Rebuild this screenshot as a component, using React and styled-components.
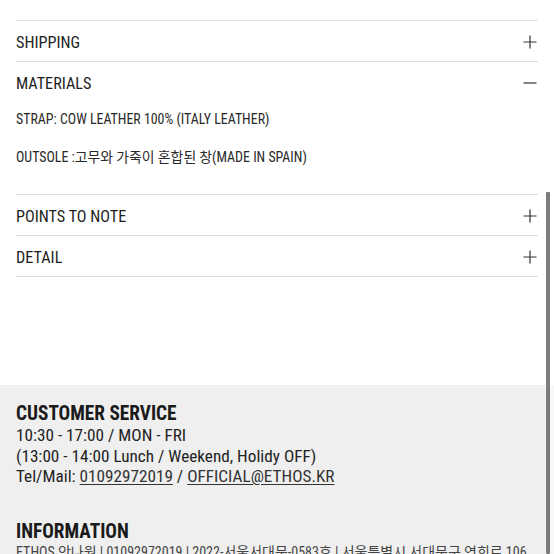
import React from "react";
import styled, { createGlobalStyle } from "styled-components";

const Global = createGlobalStyle`
  html, body { margin: 0; padding: 0; background: #fff; }
  body {
    font-family: "Roboto Condensed", "Arial Narrow", Roboto, "Noto Sans CJK KR", sans-serif;
    font-stretch: 75%;
    color: #222;
    overflow: hidden;
  }
`;

const Page = styled.div`
  display: flex;
  flex-direction: column;
  width: 554px;
  height: 554px;
  overflow: hidden;
`;

const Accordion = styled.section`
  display: flex;
  flex-direction: column;
  margin: 20px 16px 0;
  border-top: 1px solid #e2e2e2;
`;

const Item = styled.div`
  border-bottom: 1px solid #dcdcdc;
`;

const Header = styled.div`
  display: flex;
  align-items: center;
  justify-content: space-between;
  height: 40px;
  padding-top: 2px;
  box-sizing: border-box;
  font-size: 16.2px;
  color: #1e1e1e;
`;

const IconBox = styled.span`
  display: flex;
  width: 16px;
  height: 16px;
`;

const Body = styled.div`
  display: flex;
  flex-direction: column;
  gap: 16px;
  padding: 6px 0 26px;
`;

const Para = styled.p`
  margin: 0;
  font-size: 13.9px;
  line-height: 22px;
  color: #2a2a2a;
`;

const Spacer = styled.div`
  height: 108px;
  flex: none;
`;

const Footer = styled.footer`
  flex: 1;
  background: #efefef;
  padding: 18px 16px 0;
  display: flex;
  flex-direction: column;
`;

const FTitle = styled.h3`
  margin: 0;
  font-size: 19.3px;
  line-height: 22px;
  font-weight: 700;
  color: #1a1a1a;
`;

const FLine = styled.div`
  font-size: 17.2px;
  line-height: 20.5px;
  color: #222;
`;

const Link = styled.a`
  color: #333;
  text-decoration: underline;
  text-underline-offset: 2px;
  text-decoration-thickness: 1px;
`;

const Block = styled.div`
  display: flex;
  flex-direction: column;
  margin-bottom: ${(p) => p.$mb || 0}px;
`;

const Info = styled.div`
  font-size: 14px;
  line-height: 18px;
  color: #444;
  white-space: nowrap;
`;

const Thumb = styled.div`
  position: fixed;
  top: 192px;
  bottom: 0;
  right: 4px;
  width: 4px;
  background: #7c7c7c;
  border-radius: 1px;
`;

const Track = styled.div`
  position: fixed;
  top: 0;
  bottom: 0;
  right: 0;
  width: 9px;
  background: rgba(255, 255, 255, 0.55);
`;

const Plus = () => (
  <IconBox>
    <svg width="16" height="16" viewBox="0 0 16 16">
      <path d="M8 1.5v13M1.5 8h13" stroke="#333" strokeWidth="1.2" fill="none" />
    </svg>
  </IconBox>
);

const Minus = () => (
  <IconBox>
    <svg width="16" height="16" viewBox="0 0 16 16">
      <path d="M1.5 8h13" stroke="#333" strokeWidth="1.2" fill="none" />
    </svg>
  </IconBox>
);

export default function App() {
  return (
    <>
      <Global />
      <Page>
        <Accordion>
          <Item>
            <Header>
              SHIPPING
              <Plus />
            </Header>
          </Item>
          <Item>
            <Header>
              MATERIALS
              <Minus />
            </Header>
            <Body>
              <Para>STRAP: COW LEATHER 100% (ITALY LEATHER)</Para>
              <Para>OUTSOLE :고무와 가죽이 혼합된 창(MADE IN SPAIN)</Para>
            </Body>
          </Item>
          <Item>
            <Header>
              POINTS TO NOTE
              <Plus />
            </Header>
          </Item>
          <Item>
            <Header>
              DETAIL
              <Plus />
            </Header>
          </Item>
        </Accordion>
        <Spacer />
        <Footer>
          <Block $mb={34}>
            <FTitle>CUSTOMER SERVICE</FTitle>
            <FLine>10:30 - 17:00 / MON - FRI</FLine>
            <FLine>(13:00 - 14:00 Lunch / Weekend, Holidy OFF)</FLine>
            <FLine>
              Tel/Mail: <Link>01092972019</Link> / <Link>OFFICIAL@ETHOS.KR</Link>
            </FLine>
          </Block>
          <Block>
            <FTitle>INFORMATION</FTitle>
            <Info>ETHOS 안나원 | 01092972019 | 2022-서울서대문-0583호 | 서울특별시 서대문구 연희로 106</Info>
          </Block>
        </Footer>
      </Page>
      <Track />
      <Thumb />
    </>
  );
}
